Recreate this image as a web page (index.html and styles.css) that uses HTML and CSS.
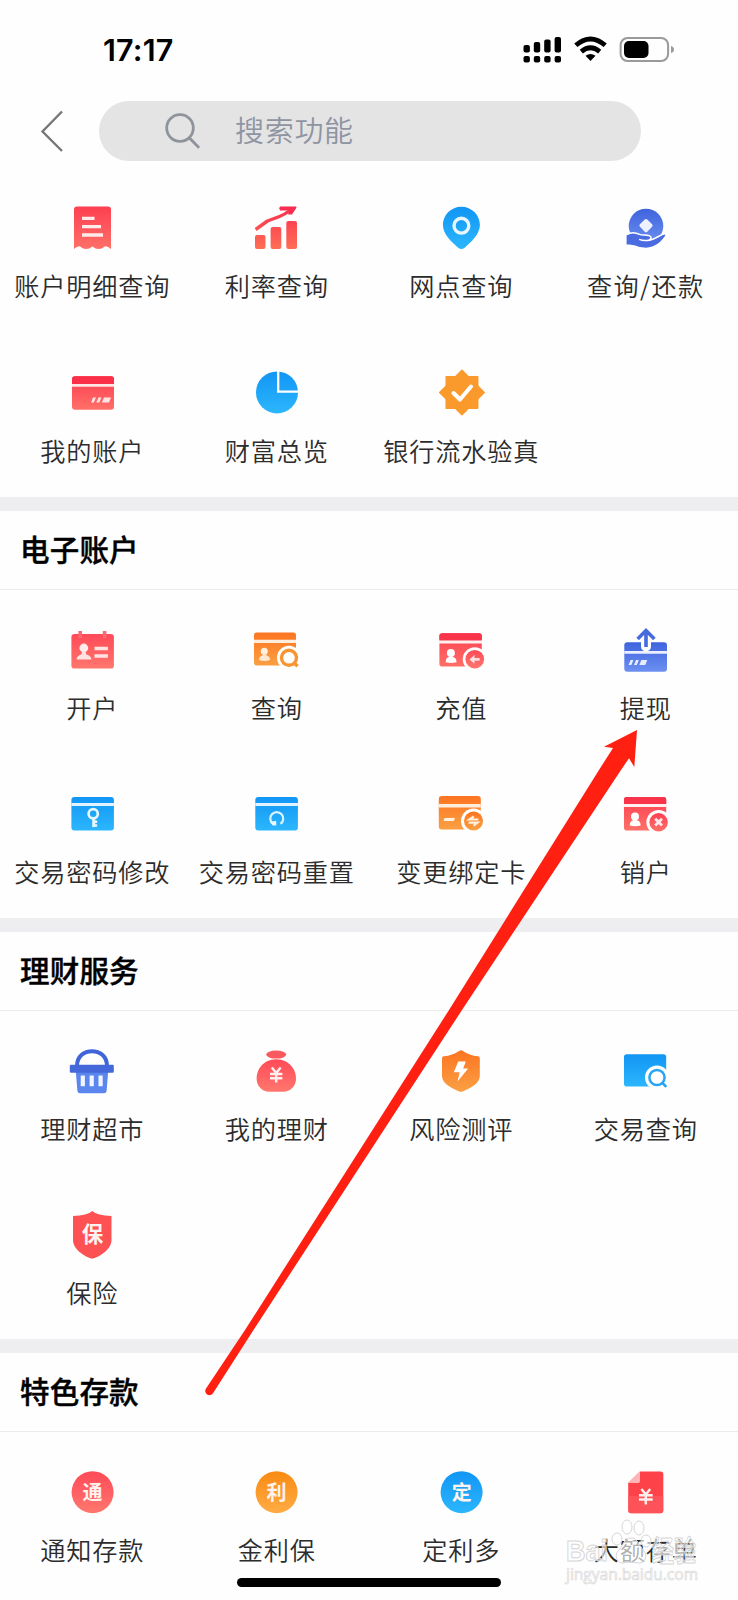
FILE: index.html
```html
<!DOCTYPE html>
<html lang="zh-CN">
<head>
<meta charset="utf-8">
<title>搜索功能</title>
<link rel="stylesheet" href="styles.css">
</head>
<body>
<svg class="defs" width="0" height="0" aria-hidden="true">
  <defs>
    <linearGradient id="red" x1="0" y1="0" x2="0" y2="1"><stop offset="0" stop-color="#fd3f52"/><stop offset="1" stop-color="#ff7068"/></linearGradient>
    <linearGradient id="coral" x1="0" y1="0" x2="0" y2="1"><stop offset="0" stop-color="#ff4a58"/><stop offset="1" stop-color="#ff776e"/></linearGradient>
    <linearGradient id="sky" x1="0" y1="0" x2="0" y2="1"><stop offset="0" stop-color="#1196f4"/><stop offset="1" stop-color="#2cb6fd"/></linearGradient>
    <linearGradient id="orange" x1="0" y1="0" x2="0" y2="1"><stop offset="0" stop-color="#fd7421"/><stop offset="1" stop-color="#faa044"/></linearGradient>
    <linearGradient id="gold" x1="0" y1="0" x2="0" y2="1"><stop offset="0" stop-color="#f98a12"/><stop offset="1" stop-color="#ffac45"/></linearGradient>
    <linearGradient id="indigo" x1="0" y1="0" x2="0" y2="1"><stop offset="0" stop-color="#3f63dc"/><stop offset="1" stop-color="#6c90f1"/></linearGradient>
    <linearGradient id="bars" gradientUnits="userSpaceOnUse" x1="0" y1="8" x2="0" y2="51"><stop offset="0" stop-color="#f82c50"/><stop offset="1" stop-color="#ff6f55"/></linearGradient>
  </defs>
</svg>
<div class="screen">
  <header class="status">
    <span class="clock">17:17</span>
    <svg class="status-icons" width="152" height="30" viewBox="0 0 152 30">
      <g fill="#000">
        <rect x="1.5" y="11" width="6.400" height="7.500" rx="2"/><rect x="11.800" y="8" width="6.400" height="10.500" rx="2"/><rect x="22.200" y="5.500" width="6.400" height="13" rx="2"/><rect x="32.600" y="3" width="6.400" height="15.500" rx="2"/>
        <rect x="1.500" y="22" width="6.400" height="6.500" rx="2"/><rect x="11.800" y="22" width="6.400" height="6.500" rx="2"/><rect x="22.200" y="22" width="6.400" height="6.500" rx="2"/><rect x="32.600" y="22" width="6.400" height="6.500" rx="2"/>
        <path d="M68.500 27l-5-5.200q5-3.800 10 0z"/>
        <rect x="102" y="7" width="24.500" height="17" rx="5"/>
      </g>
      <path d="M53.800 11.300q14.700-12.600 29.400 0M59.300 17.600q9.200-7.600 18.400 0" fill="none" stroke="#000" stroke-width="4.800"/>
      <rect x="98.600" y="4" width="47.500" height="23" rx="7" fill="none" stroke="#9a9a9a" stroke-width="2"/>
      <path d="M149 12q3 1 3 3.500t-3 3.500z" fill="#9a9a9a"/>
    </svg>
  </header>
  <nav class="topbar">
    <svg class="back" width="24" height="44" viewBox="0 0 24 44"><path d="M22 2.500L2.500 22.500 22 42" fill="none" stroke="#777" stroke-width="2.400"/></svg>
    <div class="search">
      <svg width="38" height="38" viewBox="0 0 38 38"><g fill="none" stroke="#8f939c" stroke-width="2.800" stroke-linecap="round"><circle cx="16" cy="16" r="13.300"/><path d="M25.500 26l8.800 9"/></g></svg>
      <span>搜索功能</span>
    </div>
  </nav>
  <main>
    <section class="group first">
      <div class="grid">
        <a class="item"><svg class="icon" viewBox="0 0 60 60"><path d="M15 8.600h31q3 0 3 3V51q-3.500-3-6.200-2.600-3 2.600-6.200 2.600-3 0-6.200-2.600-3 2.600-6.200 2.600t-6.200-2.600Q15 48 12 51V11.600q0-3 3-3z" fill="url(#red)"/><path d="M20 20.400h12.500M20 28.600h19M20 37h21" stroke="#ffebea" stroke-width="3.300"/></svg><span>账户明细查询</span></a>
        <a class="item"><svg class="icon" viewBox="0 0 60 60"><g fill="url(#bars)"><rect x="9" y="37" width="10.500" height="14" rx="2"/><rect x="24.600" y="29" width="10.700" height="22" rx="2"/><rect x="40.300" y="23" width="10.700" height="28" rx="2"/></g><path d="M9.600 31.500L21.500 23l12-4.500q5-2 10.500-6" fill="none" stroke="url(#bars)" stroke-width="3.400" stroke-linejoin="round"/><path d="M34 8.600h15.500q1.500 0 .8 1.400l-4.300 6.600h-4l1.600-4.200H34q-1.600-2 0-3.800z" fill="#f92d50"/></svg><span>利率查询</span></a>
        <a class="item"><svg class="icon" viewBox="0 0 60 60"><path d="M30.400 8.800c10.300 0 18.500 8.200 18.500 18.300 0 9-8.500 17-15.500 22.900q-3 2.200-6 0c-7-5.900-15.500-13.900-15.500-22.900C11.900 17 20.100 8.800 30.400 8.800z" fill="url(#sky)"/><circle cx="30.400" cy="27.700" r="7.400" fill="none" stroke="#e8f6ff" stroke-width="3.400"/></svg><span>网点查询</span></a>
        <a class="item"><svg class="icon" viewBox="0 0 60 60"><circle cx="31" cy="28" r="17.300" fill="url(#indigo)"/><rect x="25.800" y="22.400" width="10.400" height="10.400" rx="1.800" fill="#eef1ff" transform="rotate(45 31 27.600)"/><path d="M11.600 37.200c4-2 9-2.200 13 0 3 1 6 .4 9 1 3.500 1 2 4-1.500 4.200 6 .4 12.500-5.400 16.500-6.200q2.500.2 1.200 2C44 47 36 50 29 49.600c-6-.4-10-3.200-17.400-3z" fill="#4a6ce0"/><path d="M11.600 36.400c4-2 9-2 13 0 3 1 6 .4 9 1 4 1.200 2.600 4.800-1.500 5-3 .6-6-.2-8-1M32.100 42.400c6 .4 12.500-5.400 17.500-6.800" fill="none" stroke="#fff" stroke-width="1.500"/></svg><span class="spaced">查询/还款</span></a>
        <a class="item"><svg class="icon" viewBox="0 0 60 60"><rect x="10" y="13.300" width="42" height="33.400" rx="3" fill="url(#red)"/><path d="M10 21v-4.700q0-3 3-3h36q3 0 3 3V21z" fill="#fb3048"/><path d="M10 22.400h42" stroke="#ffe5e5" stroke-width="2.600"/><path d="M31 34.500h3l-2.200 5H29zM36.500 34.500h3l-2.200 5h-3zM42 34.500h7l-2 5h-7.200z" fill="#ffe4e3"/></svg><span>我的账户</span></a>
        <a class="item"><svg class="icon" viewBox="0 0 60 60"><circle cx="31" cy="29.400" r="21" fill="url(#sky)"/><path d="M32.200 7.500v21.100H53" fill="none" stroke="#fff" stroke-width="2.300"/></svg><span>财富总览</span></a>
        <a class="item"><svg class="icon" viewBox="0 0 60 60"><g fill="#fb9a2c" stroke="#fb9a2c" stroke-width="1.500" stroke-linejoin="round"><rect x="15.200" y="13.800" width="31.500" height="31.500"/><rect x="15.200" y="13.800" width="31.500" height="31.500" transform="rotate(45 31 29.550)"/></g><path d="M22.500 30l6.500 6.500 11-13" fill="none" stroke="#fff" stroke-width="4" stroke-linecap="round" stroke-linejoin="round"/></svg><span>银行流水验真</span></a>
      </div>
    </section>

    <section class="group">
      <h2>电子账户</h2>
      <div class="grid">
        <a class="item"><svg class="icon" viewBox="0 0 60 60"><rect x="9.400" y="14" width="42.500" height="34.600" rx="3.200" fill="url(#coral)"/><path d="M18.200 11v7M42.600 11v7" stroke="#ff6771" stroke-width="3.600"/><circle cx="21.800" cy="28" r="4.400" fill="#ffebeb"/><path d="M14.600 39.600q0-4 4.700-5.200l1-3.400h3l1 3.400q5 1.200 5 5.200z" fill="#ffe3e3"/><path d="M32.500 28.500h13.400M32.500 36h13.400" stroke="#ffe3e3" stroke-width="3.500"/></svg><span>开户</span></a>
        <a class="item"><svg class="icon" viewBox="0 0 60 60"><rect x="8" y="12.500" width="42" height="33" rx="2.800" fill="url(#orange)"/><path d="M8 21.400h42" stroke="#ffeedd" stroke-width="3.400"/><circle cx="18.300" cy="31.200" r="3.500" fill="#fff0e0"/><path d="M13 40q0-4 3.500-4.500l1-3h2l1 3q3.500.5 3.500 4.500-5.500 1.800-11 0z" fill="#ffe8cf"/><circle cx="43" cy="37.800" r="12" fill="#fff"/><circle cx="43" cy="37.800" r="7.500" fill="none" stroke="#f89531" stroke-width="3.400"/><path d="M47.500 42.200l4 4" stroke="#f89531" stroke-width="3.400"/></svg><span>查询</span></a>
        <a class="item"><svg class="icon" viewBox="0 0 60 60"><rect x="8.400" y="13.200" width="42.400" height="33.400" rx="2.800" fill="url(#red)"/><path d="M8.400 20.500V16q0-2.800 2.800-2.800H48q2.800 0 2.800 2.800v4.500z" fill="#f93349"/><path d="M8 22h43" stroke="#fff0f0" stroke-width="3"/><circle cx="19.900" cy="33" r="4" fill="#fff"/><path d="M14.700 42.200q0-4.700 3.600-5.200l.6-2.500h2l.6 2.500q4 .5 4 5.200-5.400 1.600-10.800 0z" fill="#fff"/><circle cx="43.800" cy="39.200" r="12" fill="#fff"/><circle cx="43.800" cy="39.200" r="9.300" fill="url(#coral)"/><path d="M48.600 39.400h-6" stroke="#ffe3e3" stroke-width="2.600"/><path d="M38.500 39.400l5-4.400v8.800z" fill="#ffe3e3"/></svg><span>充值</span></a>
        <a class="item"><svg class="icon" viewBox="0 0 60 60"><rect x="9.300" y="22.200" width="42.700" height="29.600" rx="3" fill="url(#indigo)"/><path d="M9.300 32.400H52" stroke="#eaf0ff" stroke-width="2.800"/><path d="M27 20v6.500a4 4 0 0 0 8 0V20" fill="#fff" stroke="#fff" stroke-width="2"/><path d="M31 27V11M22.600 19l8.400-8.400 8.400 8.400" fill="none" stroke="#fff" stroke-width="6"/><path d="M31 27V11M22.600 19l8.400-8.400 8.400 8.400" fill="none" stroke="#456bdd" stroke-width="3.600"/><path d="M15.600 40h2.800l-2 5h-2.800zM21 40h2.800l-2 5H19zM26.300 40h6l-2 5h-6z" fill="#e7edff"/></svg><span>提现</span></a>
        <a class="item"><svg class="icon" viewBox="0 0 60 60"><rect x="9.400" y="13" width="42.500" height="33.400" rx="3" fill="url(#sky)"/><path d="M9.400 20.400h42.500" stroke="#e1f4ff" stroke-width="3"/><g fill="none" stroke="#e6f7ff"><circle cx="31.200" cy="29.800" r="4.600" stroke-width="2.700"/><path d="M31.700 34.500v8.600" stroke-width="3"/><path d="M32 37.700h3.200M32 41.500h3.200" stroke-width="2.400"/></g></svg><span>交易密码修改</span></a>
        <a class="item"><svg class="icon" viewBox="0 0 60 60"><rect x="9.300" y="13" width="42.600" height="33.400" rx="3" fill="url(#sky)"/><path d="M9.300 20.400h42.600" stroke="#e1f4ff" stroke-width="3"/><path d="M34.500 39.900a6.500 6.500 0 1 0-7.500 0" fill="none" stroke="#dcf3ff" stroke-width="2.200"/><path d="M24.500 37.500l5.700-.5v4.500h-3.500z" fill="#eaf8ff"/></svg><span>交易密码重置</span></a>
        <a class="item"><svg class="icon" viewBox="0 0 60 60"><rect x="7.800" y="12" width="42" height="33.400" rx="3" fill="url(#orange)"/><path d="M7.800 21.700h42" stroke="#ffeedd" stroke-width="3.400"/><path d="M13.500 34h10.500l-1.200 3H12.500z" fill="#fff3e4"/><circle cx="42.500" cy="37" r="12.500" fill="#fff"/><circle cx="42.500" cy="37" r="9.500" fill="url(#orange)"/><path d="M47.500 35.500H38.500l4.300-3M37.500 38.700h9l-4 3" fill="none" stroke="#fff0dc" stroke-width="2.200"/></svg><span>变更绑定卡</span></a>
        <a class="item"><svg class="icon" viewBox="0 0 60 60"><rect x="9" y="13" width="42.200" height="33.600" rx="2.800" fill="url(#red)"/><path d="M9 20v-4.200Q9 13 11.800 13h36.600q2.800 0 2.800 2.800V20z" fill="#f93349"/><path d="M8.600 21.400h43" stroke="#fff0f0" stroke-width="3"/><circle cx="20" cy="32.400" r="4" fill="#fff"/><path d="M14.800 41.400q0-4.700 3.600-5.200l.6-2.500h2l.6 2.500q4 .5 4 5.200-5.400 1.600-10.800 0z" fill="#fff"/><circle cx="43.600" cy="38.200" r="12.200" fill="#fff"/><circle cx="43.600" cy="38.200" r="9.200" fill="url(#red)"/><path d="M40.200 34.800l6.800 6.800m0-6.800l-6.800 6.800" stroke="#ffe9e9" stroke-width="2.800"/></svg><span>销户</span></a>
      </div>
    </section>

    <section class="group">
      <h2>理财服务</h2>
      <div class="grid">
        <a class="item"><svg class="icon" viewBox="0 0 60 60"><path d="M15 25C15 5.200 45 5.200 45 25" fill="none" stroke="#4165d8" stroke-width="4"/><path d="M13.800 30h32.400L44.600 50q-.3 2.200-2.600 2.200H18q-2.300 0-2.600-2.200z" fill="#5a86ee"/><rect x="7.800" y="23.800" width="44" height="8" rx="1.300" fill="#4468da"/><path d="M20.800 34.500v10.800M29.700 34.500v10.800M38.600 34.500v10.800" stroke="#f1f5ff" stroke-width="4.200"/></svg><span>理财超市</span></a>
        <a class="item"><svg class="icon" viewBox="0 0 60 60"><ellipse cx="30.200" cy="13.600" rx="10" ry="4" fill="#fb5960"/><path d="M20.500 20.500q9.700-4.400 19.400 0c6 3.500 10.100 9.500 10.100 17 0 8-6 13.200-12.500 13.200H23c-6.500 0-12.400-5.200-12.400-13.200 0-7.500 4-13.500 9.900-17z" fill="url(#coral)"/><path d="M25.800 26.500l4.400 5.500 4.400-5.500M30.200 31.500v10M24 33h12.400M24 37.300h12.400" fill="none" stroke="#ffecec" stroke-width="2.500"/></svg><span>我的理财</span></a>
        <a class="item"><svg class="icon" viewBox="0 0 60 60"><path d="M28.500 9.700q1.500-.8 3 0 7 4.800 15.500 5.600 1.800.2 1.800 2v18c0 8-12 13-17 15.200q-1.800.7-3.600 0C23 48.300 11 43.300 11 35.300v-18q0-1.800 1.800-2 8.700-.8 15.700-5.600z" fill="url(#orange)"/><path d="M27.200 20.500h7.600l-2.600 7h5L26.500 40.500l2.200-9.200h-5.900z" fill="#fff"/></svg><span>风险测评</span></a>
        <a class="item"><svg class="icon" viewBox="0 0 60 60"><rect x="9" y="13.200" width="42.200" height="32.300" rx="2.800" fill="url(#sky)"/><circle cx="42" cy="36.500" r="12" fill="#fff"/><circle cx="42" cy="36.500" r="7.600" fill="none" stroke="#27a5f4" stroke-width="2.500"/><path d="M47 41.500l4.300 4.300" stroke="#27a5f4" stroke-width="2.600"/></svg><span>交易查询</span></a>
        <a class="item"><svg class="icon" viewBox="0 0 60 60"><path d="M30.300 6q4.700 4.600 19.200 5v24c0 9-11 16.500-19.200 18.800C22.100 51.500 11 44 11 35V11q14.600-.4 19.300-5z" fill="#fd5153"/><text x="30.600" y="36.500" class="glyph big">保</text></svg><span>保险</span></a>
      </div>
    </section>

    <section class="group last">
      <h2>特色存款</h2>
      <div class="grid">
        <a class="item"><svg class="icon" viewBox="0 0 60 60"><circle cx="30.600" cy="30.200" r="21" fill="url(#coral)"/><text x="30.500" y="37.500" class="glyph">通</text></svg><span>通知存款</span></a>
        <a class="item"><svg class="icon" viewBox="0 0 60 60"><circle cx="30.600" cy="30.200" r="21" fill="url(#gold)"/><text x="30.500" y="37.500" class="glyph">利</text></svg><span>金利保</span></a>
        <a class="item"><svg class="icon" viewBox="0 0 60 60"><circle cx="30.600" cy="30.200" r="21" fill="url(#sky)"/><text x="30.700" y="37.500" class="glyph">定</text></svg><span>定利多</span></a>
        <a class="item"><svg class="icon" viewBox="0 0 60 60"><path d="M25 9.500h20.500q2.800 0 2.800 2.800v36q0 2.900-2.800 2.900H16q-2.800 0-2.800-2.900V21z" fill="#fd4349"/><path d="M13.200 34h35.100v14.300q0 2.900-2.800 2.900H16q-2.800 0-2.800-2.900z" fill="#fe5a60" opacity=".65"/><path d="M25 9.500L13.200 21H23q2 0 2-2z" fill="#ffb4b7"/><path d="M26.400 27l4.400 5.500 4.400-5.500M30.800 32v10.500M23.900 33.200h13.800M23.900 37.500h13.800" fill="none" stroke="#ffecec" stroke-width="2.500"/></svg><span>大额存单</span></a>
      </div>
    </section>
  </main>
  <svg class="pointer" width="738" height="1600" viewBox="0 0 738 1600"><path d="M637 730L604 746.700l9 1.200L599 770 449 1010 245 1330l-39 58.500a4.200 4.200 0 0 0 7 4.800L253.500 1330 462 1010 621 770l8-11.800 5.300 8.800z" fill="#ff2012"/></svg>
  <div class="home"></div>
  <svg class="watermark" width="150" height="74" viewBox="0 0 150 74">
    <g fill="#fff" fill-opacity=".62" stroke="#d6d6d6" stroke-width="1">
      <text x="5" y="47" class="wm-name" textLength="42" lengthAdjust="spacingAndGlyphs">Bai</text>
      <ellipse cx="66" cy="13" rx="5" ry="7"/><ellipse cx="78" cy="14" rx="5" ry="7"/><ellipse cx="56" cy="25" rx="5" ry="6"/><ellipse cx="85" cy="27" rx="5" ry="6"/>
      <path d="M70 24c7 0 8 8 13 13 4 5 1 12-5 12-6-1-10-1-16 0-6 0-9-7-5-12 5-5 6-13 13-13z"/>
      <text x="91" y="48" class="wm-name" textLength="44" lengthAdjust="spacingAndGlyphs">经验</text>
    </g>
    <text x="5" y="65.500" class="wm-url" textLength="132" lengthAdjust="spacingAndGlyphs">jingyan.baidu.com</text>
  </svg>
</div>
</body>
</html>
```

FILE: styles.css
```css
body {
  margin: 0;
  background: #fff;
  font-family: "Noto Sans CJK SC", sans-serif;
}

.defs {
  position: absolute;
}

.screen {
  position: relative;
  width: 738px;
  height: 1600px;
  overflow: hidden;
  background: #fefefe;
}

.status {
  display: flex;
  justify-content: space-between;
  align-items: flex-start;
  box-sizing: border-box;
  height: 101px;
  padding: 34px 64px 0 103px;
}

.clock {
  font: 600 30.5px/32px "Inter", sans-serif;
  letter-spacing: 0.2px;
  color: #000;
}

.status-icons {
  display: block;
}

.topbar {
  display: flex;
  align-items: center;
  gap: 35px;
  height: 60px;
  padding-left: 40px;
}

.back {
  flex: none;
}

.search {
  display: flex;
  align-items: center;
  gap: 33px;
  box-sizing: border-box;
  width: 542px;
  height: 60px;
  padding-left: 65px;
  border-radius: 30px;
  background: #e4e4e4;
  color: #8f94a3;
  font-size: 29px;
  font-weight: 350;
  line-height: 56px;
  letter-spacing: 0.7px;
}

.search span {
  padding-bottom: 4px;
}

.group {
  box-sizing: border-box;
  height: 421px;
  border-bottom: 14px solid #eeeef1;
}

.group.first {
  height: 350px;
  padding-top: 7.4px;
}

.group.last {
  border-bottom: 0;
}

h2 {
  box-sizing: border-box;
  height: 78.5px;
  margin: 0;
  padding-left: 20px;
  border-bottom: 1px solid #ebebee;
  color: #000;
  font-size: 29.5px;
  font-weight: 500;
  line-height: 74px;
  letter-spacing: 0.2px;
  -webkit-text-stroke: 0.4px #000;
}

.grid {
  display: grid;
  grid-template-columns: repeat(4, 184.5px);
  grid-auto-rows: 164.3px;
}

.item {
  display: flex;
  flex-direction: column;
  align-items: center;
  padding-top: 30px;
  color: #2c2c2c;
  font-size: 25.2px;
  font-weight: 350;
  line-height: 36px;
  letter-spacing: 0.8px;
  white-space: nowrap;
}

.spaced {
  letter-spacing: 1.4px;
}

.icon {
  width: 60px;
  height: 60px;
  margin: 0 1px 9px 0;
}

.glyph {
  fill: #fff3f0;
  font-size: 20px;
  font-weight: 700;
  letter-spacing: 0;
  text-anchor: middle;
}

.glyph.big {
  font-size: 21.5px;
}

.pointer {
  position: absolute;
  top: 0;
  left: 0;
}

.home {
  position: absolute;
  left: 237px;
  bottom: 13.5px;
  width: 264px;
  height: 8.5px;
  border-radius: 5px;
  background: #000;
}

.watermark {
  position: absolute;
  left: 561px;
  top: 1514px;
}

.wm-name {
  font-size: 29px;
  font-weight: 700;
  font-family: "Liberation Sans", "Noto Sans CJK SC", sans-serif;
}

.wm-url {
  fill: #fff;
  fill-opacity: .8;
  stroke: #dadada;
  stroke-width: .7;
  font: 16px "Open Sans", sans-serif;
}
```
